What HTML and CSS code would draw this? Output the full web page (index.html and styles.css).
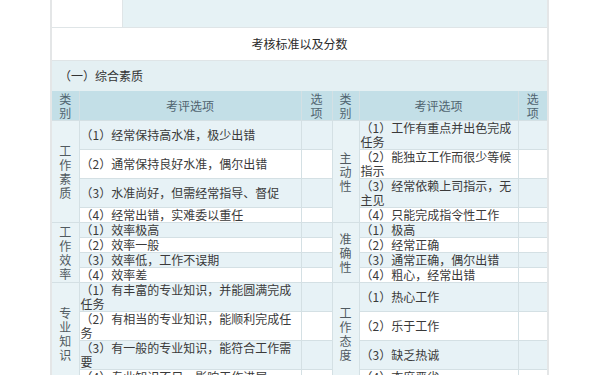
FILE: index.html
```html
<!DOCTYPE html>
<html lang="zh-CN">
<head>
<meta charset="utf-8">
<title>考核标准以及分数</title>
<link rel="stylesheet" href="styles.css">
</head>
<body>
<div class="sheet">
  <div class="top-row">
    <div class="top-left"></div>
    <div class="top-right"></div>
  </div>
  <div class="title">考核标准以及分数</div>
  <div class="section">（一）综合素质</div>
  <table class="grid">
    <colgroup>
      <col class="c-cat"><col class="c-text-l"><col class="c-sel"><col class="c-cat"><col class="c-text-r"><col class="c-sel-r">
    </colgroup>
    <thead>
      <tr>
        <th><span class="stack">类别</span></th>
        <th>考评选项</th>
        <th><span class="stack">选项</span></th>
        <th><span class="stack">类别</span></th>
        <th>考评选项</th>
        <th><span class="stack">选项</span></th>
      </tr>
    </thead>
    <tbody>
      <tr class="odd">
        <td class="cat" rowspan="4"><span class="stack">工作素质</span></td>
        <td class="txt">（1）经常保持高水准，极少出错</td>
        <td></td>
        <td class="cat" rowspan="4"><span class="stack">主动性</span></td>
        <td class="txt">（1）工作有重点并出色完成任务</td>
        <td></td>
      </tr>
      <tr>
        <td class="txt">（2）通常保持良好水准，偶尔出错</td>
        <td></td>
        <td class="txt">（2）能独立工作而很少等候指示</td>
        <td></td>
      </tr>
      <tr class="odd">
        <td class="txt">（3）水准尚好，但需经常指导、督促</td>
        <td></td>
        <td class="txt">（3）经常依赖上司指示，无主见</td>
        <td></td>
      </tr>
      <tr>
        <td class="txt">（4）经常出错，实难委以重任</td>
        <td></td>
        <td class="txt">（4）只能完成指令性工作</td>
        <td></td>
      </tr>
      <tr class="odd">
        <td class="cat" rowspan="4"><span class="stack">工作效率</span></td>
        <td class="txt">（1）效率极高</td>
        <td></td>
        <td class="cat" rowspan="4"><span class="stack">准确性</span></td>
        <td class="txt">（1）极高</td>
        <td></td>
      </tr>
      <tr>
        <td class="txt">（2）效率一般</td>
        <td></td>
        <td class="txt">（2）经常正确</td>
        <td></td>
      </tr>
      <tr class="odd">
        <td class="txt">（3）效率低，工作不误期</td>
        <td></td>
        <td class="txt">（3）通常正确，偶尔出错</td>
        <td></td>
      </tr>
      <tr>
        <td class="txt">（4）效率差</td>
        <td></td>
        <td class="txt">（4）粗心，经常出错</td>
        <td></td>
      </tr>
      <tr class="odd">
        <td class="cat" rowspan="4"><span class="stack">专业知识</span></td>
        <td class="txt">（1）有丰富的专业知识，并能圆满完成任务</td>
        <td></td>
        <td class="cat" rowspan="4"><span class="stack">工作态度</span></td>
        <td class="txt">（1）热心工作</td>
        <td></td>
      </tr>
      <tr>
        <td class="txt">（2）有相当的专业知识，能顺利完成任务</td>
        <td></td>
        <td class="txt">（2）乐于工作</td>
        <td></td>
      </tr>
      <tr class="odd">
        <td class="txt">（3）有一般的专业知识，能符合工作需要</td>
        <td></td>
        <td class="txt">（3）缺乏热诚</td>
        <td></td>
      </tr>
      <tr>
        <td class="txt">（4）专业知识不足，影响工作进展</td>
        <td></td>
        <td class="txt">（4）态度恶劣</td>
        <td></td>
      </tr>
    </tbody>
  </table>
</div>
</body>
</html>
```

FILE: styles.css
```css
html, body {
  margin: 0;
  padding: 0;
  background: #ffffff;
}

body {
  font-family: "Noto Sans CJK SC", "Noto Sans", "Liberation Sans", sans-serif;
  font-size: 12px;
  color: #3a3a3a;
}

.sheet {
  width: 499px;
  margin-left: 50px;
  box-sizing: border-box;
  border-left: 2px solid #e4e6e7;
  border-right: 2px solid #e4e6e7;
}

.top-row {
  display: grid;
  grid-template-columns: 71px 1fr;
  height: 27px;
  border-bottom: 1px solid #dfe5e7;
}

.top-left {
  background: #ffffff;
  border-right: 1px solid #dfe5e7;
}

.top-right {
  background: #e6f2f5;
}

.title {
  height: 32px;
  line-height: 32px;
  text-align: center;
  color: #2a2a2a;
  border-bottom: 1px solid #dfe5e7;
}

.section {
  height: 30px;
  line-height: 30px;
  padding-left: 7px;
  background: #e4f0f3;
  color: #333333;
}

.grid {
  width: 495px;
  table-layout: fixed;
  border-collapse: collapse;
  border-style: hidden;
}

.c-cat { width: 27px; }
.c-text-l { width: 222px; }
.c-sel { width: 31px; }
.c-text-r { width: 159px; }
.c-sel-r { width: 29px; }

.grid th,
.grid td {
  border: 1px solid #d4e0e4;
  padding: 0;
  line-height: 14px;
  vertical-align: middle;
}

.grid th {
  background: #c3dfe7;
  color: #506470;
  font-weight: normal;
  text-align: center;
  height: 29px;
}

.grid tbody tr {
  background: #ffffff;
}

.grid tbody tr.odd {
  background: #e7f2f6;
}

.grid td.cat {
  background: #e9f3f6;
  text-align: center;
  color: #505a60;
}

.grid td.txt {
  padding-left: 1px;
  color: #3a3a3a;
}

.stack {
  display: inline-block;
  width: 1em;
  text-align: center;
  vertical-align: middle;
}
```
